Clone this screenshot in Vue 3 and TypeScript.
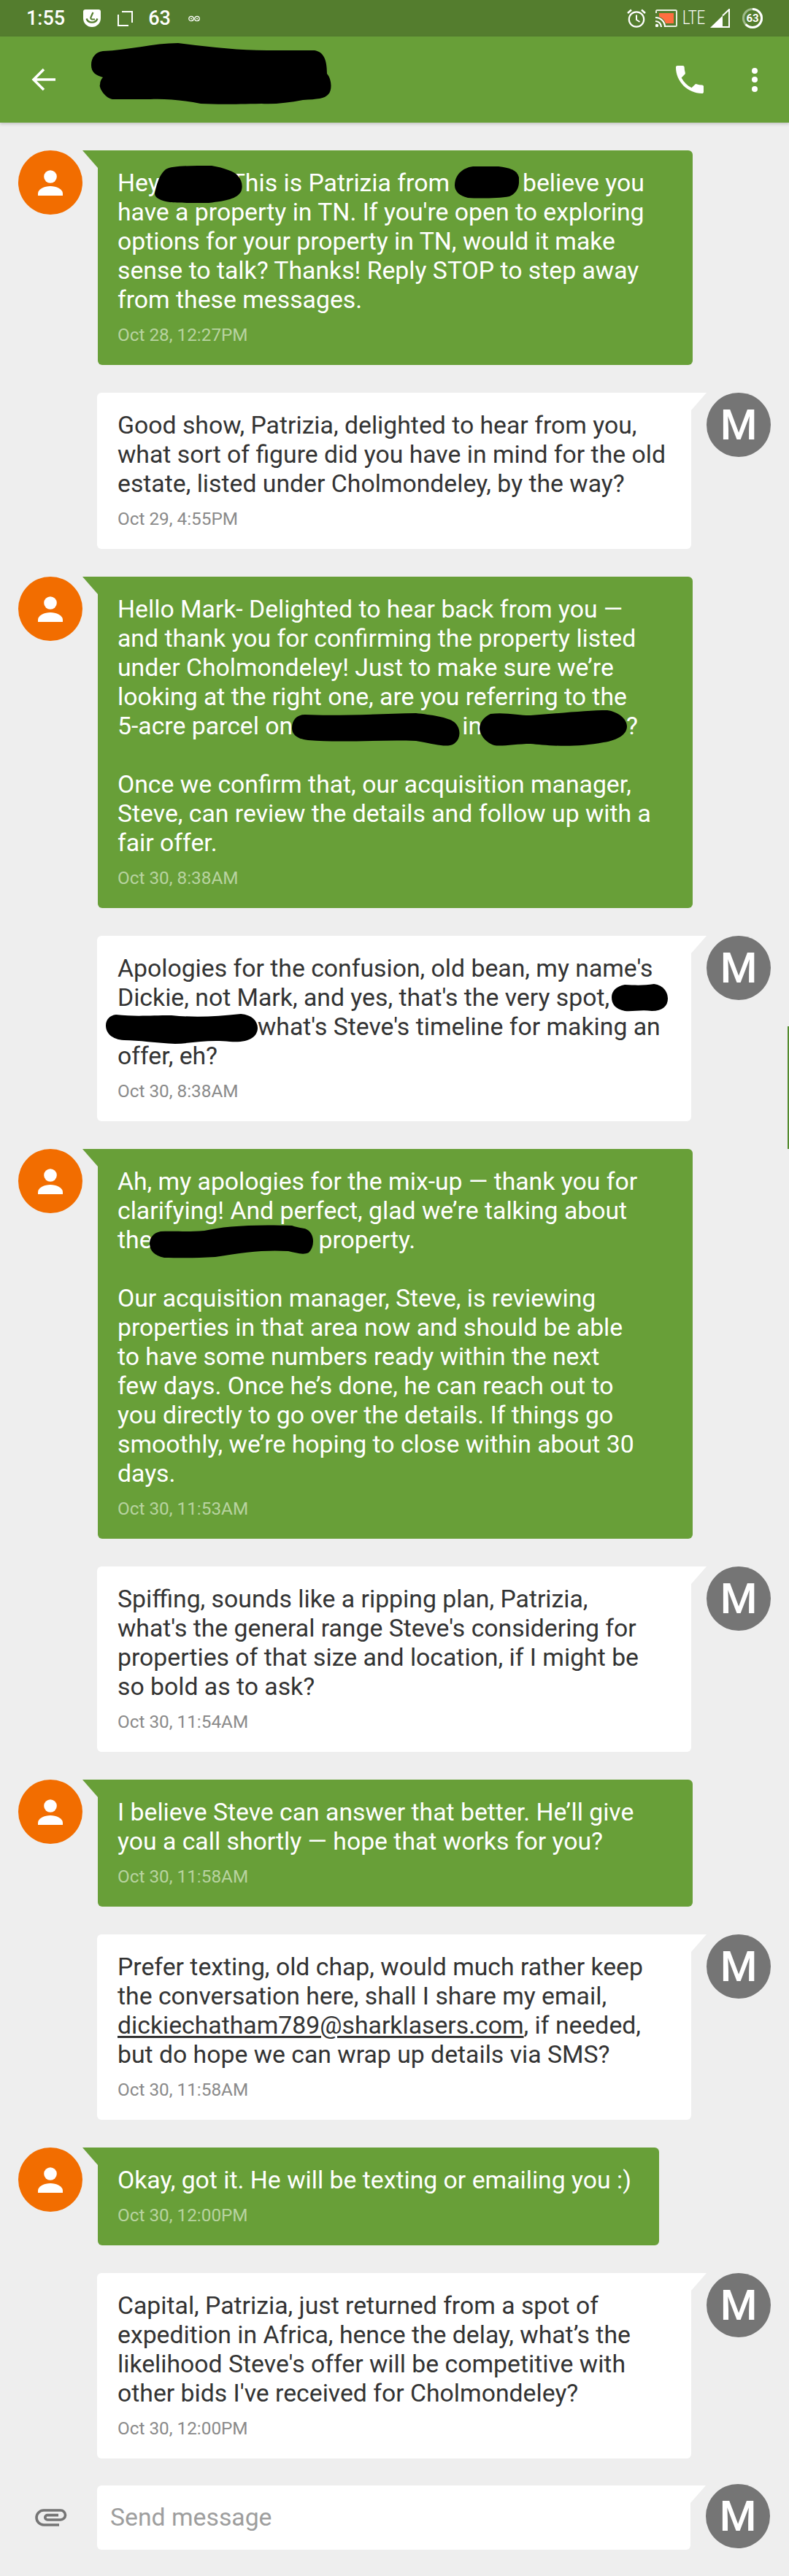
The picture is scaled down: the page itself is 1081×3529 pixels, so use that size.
<script setup lang="ts">
interface Seg { t?: string; gap?: number; u?: boolean }
interface Blob { x: number; y: number; w: number; h: number; d: string }
interface Msg { who: 'them' | 'me'; lines: (string | Seg[])[]; time: string; blobs?: Blob[]; short?: boolean }

const messages: Msg[] = [
  {
    who: 'them',
    time: 'Oct 28, 12:27PM',
    lines: [
      [{ t: 'Hey' }, { gap: 97 }, { t: 'This is Patrizia from' }, { gap: 100 }, { t: 'believe you' }],
      "have a property in TN. If you're open to exploring",
      'options for your property in TN, would it make',
      'sense to talk? Thanks! Reply STOP to step away',
      'from these messages.',
    ],
    blobs: [
      { x: 78, y: 21, w: 120, h: 51, d: 'M0 38C2 28 6 12 15 5C23 0 47 0 78 0C95 3 110 8 114 14C120 20 121 30 118 36C112 45 100 48 74 51C50 51 30 51 21 50C8 48 0 44 0 38Z' },
      { x: 489, y: 22, w: 88, h: 44, d: 'M0 26C0 12 10 2 25 0H60C75 2 85 4 88 15C89 27 86 36 75 41C60 44 30 44 18 43C6 40 0 34 0 26Z' },
    ],
  },
  {
    who: 'me',
    time: 'Oct 29, 4:55PM',
    lines: [
      'Good show, Patrizia, delighted to hear from you,',
      'what sort of figure did you have in mind for the old',
      'estate, listed under Cholmondeley, by the way?',
    ],
  },
  {
    who: 'them',
    time: 'Oct 30, 8:38AM',
    lines: [
      'Hello Mark- Delighted to hear back from you —',
      'and thank you for confirming the property listed',
      'under Cholmondeley! Just to make sure we’re',
      'looking at the right one, are you referring to the',
      [{ t: '5-acre parcel on' }, { gap: 232 }, { t: 'in' }, { gap: 198 }, { t: '?' }],
      '',
      'Once we confirm that, our acquisition manager,',
      'Steve, can review the details and follow up with a',
      'fair offer.',
    ],
    blobs: [
      { x: 266, y: 187, w: 230, h: 45, d: 'M18 2C60 4 120 1 170 0C190 2 215 6 222 12C232 20 232 35 222 42C212 48 195 42 170 38C120 36 70 41 22 37C5 35 0 28 0 20C0 10 6 2 18 2Z' },
      { x: 523, y: 183, w: 202, h: 49, d: 'M15 5C35 2 60 8 70 7C110 4 150 0 175 0C190 2 202 12 202 22C202 33 190 41 170 44C130 52 90 48 70 46C50 46 30 50 20 48C5 43 0 30 0 25C0 17 6 9 15 5Z' },
    ],
  },
  {
    who: 'me',
    time: 'Oct 30, 8:38AM',
    lines: [
      "Apologies for the confusion, old bean, my name's",
      "Dickie, not Mark, and yes, that's the very spot,",
      [{ gap: 192 }, { t: "what's Steve's timeline for making an" }],
      'offer, eh?',
    ],
    blobs: [
      { x: 705, y: 66, w: 77, h: 38, d: 'M18 1C35 2 45 2 58 0C72 2 77 12 77 20C77 30 70 37 55 37C40 35 30 38 18 37C5 34 0 28 0 18C0 10 6 3 18 1Z' },
      { x: 12, y: 107, w: 208, h: 41, d: 'M14 1C40 4 60 2 90 2C120 5 150 4 185 0C200 1 208 10 208 19C208 32 195 40 170 38C140 35 120 40 95 41C70 40 45 36 25 36C8 35 0 26 0 16C0 8 5 2 14 1Z' },
    ],
  },
  {
    who: 'them',
    time: 'Oct 30, 11:53AM',
    lines: [
      'Ah, my apologies for the mix-up — thank you for',
      'clarifying! And perfect, glad we’re talking about',
      [{ t: 'the' }, { gap: 228 }, { t: 'property.' }],
      '',
      'Our acquisition manager, Steve, is reviewing',
      'properties in that area now and should be able',
      'to have some numbers ready within the next',
      'few days. Once he’s done, he can reach out to',
      'you directly to go over the details. If things go',
      'smoothly, we’re hoping to close within about 30',
      'days.',
    ],
    blobs: [
      { x: 71, y: 104, w: 225, h: 46, d: 'M15 9C35 8 50 10 75 8C100 2 140 -1 195 1C205 5 212 3 218 8C226 15 226 30 218 38C210 42 200 38 190 36C160 34 130 37 90 44C60 46 35 45 20 45C6 42 0 35 0 25C0 18 5 11 15 9Z' },
    ],
  },
  {
    who: 'me',
    time: 'Oct 30, 11:54AM',
    lines: [
      'Spiffing, sounds like a ripping plan, Patrizia,',
      "what's the general range Steve's considering for",
      'properties of that size and location, if I might be',
      'so bold as to ask?',
    ],
  },
  {
    who: 'them',
    time: 'Oct 30, 11:58AM',
    lines: [
      'I believe Steve can answer that better. He’ll give',
      'you a call shortly — hope that works for you?',
    ],
  },
  {
    who: 'me',
    time: 'Oct 30, 11:58AM',
    lines: [
      'Prefer texting, old chap, would much rather keep',
      'the conversation here, shall I share my email,',
      [{ t: 'dickiechatham789@sharklasers.com', u: true }, { t: ', if needed,' }],
      'but do hope we can wrap up details via SMS?',
    ],
  },
  {
    who: 'them',
    time: 'Oct 30, 12:00PM',
    short: true,
    lines: ['Okay, got it. He will be texting or emailing you :)'],
  },
  {
    who: 'me',
    time: 'Oct 30, 12:00PM',
    lines: [
      'Capital, Patrizia, just returned from a spot of',
      'expedition in Africa, hence the delay, what’s the',
      "likelihood Steve's offer will be competitive with",
      "other bids I've received for Cholmondeley?",
    ],
  },
]

const segs = (l: string | Seg[]): Seg[] => (typeof l === 'string' ? [{ t: l }] : l)
</script>

<template>
  <div class="page">
    <header class="status">
      <div class="status-left">
        <span class="clock">1:55</span>
        <svg class="i-shield" viewBox="0 0 24 24" width="24" height="24">
          <path d="M3 0H21a3 3 0 0 1 3 3V12A12 12 0 0 1 0 12V3A3 3 0 0 1 3 0Z" fill="#fff" />
          <path d="M13.5 4L10.5 10.5Q9.8 13.5 12.5 13.5H16M4.5 12.5A8 8 0 0 0 19.5 12.5" fill="none" stroke="#547d2e" stroke-width="2.2" />
        </svg>
        <svg class="i-frame" viewBox="0 0 21 21" width="21" height="21">
          <path d="M6 1H20V16M15 20H1V5" fill="none" stroke="#fff" stroke-width="2" />
        </svg>
        <span class="num">63</span>
        <svg class="i-loop" viewBox="0 0 16 9" width="16" height="9">
          <circle cx="4" cy="4.5" r="3.2" fill="none" stroke="#fff" stroke-width="1.3" />
          <circle cx="12" cy="4.5" r="3.2" fill="none" stroke="#fff" stroke-width="1.3" />
          <circle cx="4" cy="4.5" r="1" fill="#fff" />
          <circle cx="12" cy="4.5" r="1" fill="#fff" />
        </svg>
      </div>
      <div class="status-right">
        <svg class="i-alarm" viewBox="0 0 26 26" width="26" height="26">
          <circle cx="13" cy="14.5" r="10.2" fill="none" stroke="#fff" stroke-width="2.2" />
          <path d="M13 8.5V15L17.5 18" fill="none" stroke="#fff" stroke-width="2" />
          <path d="M1 6L6 1.5M25 6L20 1.5" fill="none" stroke="#fff" stroke-width="2.4" />
        </svg>
        <svg class="i-cast" viewBox="0 0 30 24" width="30" height="24">
          <path d="M1 5V2.5A1.5 1.5 0 0 1 2.500 1H27.500A1.500 1.500 0 0 1 29 2.500V21.500A1.500 1.500 0 0 1 27.500 23H14" fill="none" stroke="#e8efe0" stroke-width="2" />
          <path d="M5 5H25V19H14A13 13 0 0 0 5 10Z" fill="#ff6e40" />
          <path d="M0 11A13 13 0 0 1 13 24M0 16A8 8 0 0 1 8 24" fill="none" stroke="#fff" stroke-width="2.200" />
          <circle cx="2" cy="22" r="2.200" fill="#fff" />
        </svg>
        <span class="lte">LTE</span>
        <svg class="i-signal" viewBox="0 0 27 26" width="27" height="26">
          <path d="M0 26L17 9.500V26Z" fill="#fff" />
          <path d="M17 9.500L26 1V25H17" fill="none" stroke="#fff" stroke-width="2" />
        </svg>
        <div class="battery">
          <svg viewBox="0 0 28 28" width="28" height="28">
            <circle cx="14" cy="14" r="12.500" fill="none" stroke="#9db98a" stroke-width="3" />
            <circle cx="14" cy="14" r="12.500" fill="none" stroke="#fff" stroke-width="3" stroke-dasharray="49.500 78.500" transform="rotate(-90 14 14)" />
          </svg>
          <span>63</span>
        </div>
      </div>
    </header>

    <div class="appbar">
      <svg class="back" viewBox="0 0 33 32" width="33" height="32">
        <path d="M33 16H3M17 2L3 16L17 30" fill="none" stroke="#fff" stroke-width="3.500" />
      </svg>
      <svg class="title-blob" viewBox="0 0 331 84" width="331" height="84">
        <path d="M0 30C0 20 6 12 16 11C50 10 85 0 119 0C160 5 200 10 241 10H306C318 12 323 22 323 42C330 50 330 65 325 70C320 76 310 77 290 78C270 82 250 84 233 83C190 84 170 84 150 83C125 78 100 76 81 77H29C18 75 10 60 12 57C12 52 14 49 16 47C6 44 0 40 0 30Z" fill="#000" />
      </svg>
      <svg class="phone" viewBox="3 3 18 18" width="38" height="38">
        <path d="M6.620 10.790c1.440 2.830 3.760 5.140 6.590 6.590l2.200-2.200c.27-.27.67-.36 1.020-.24 1.120.37 2.330.57 3.570.57.55 0 1 .45 1 1V20c0 .55-.45 1-1 1-9.390 0-17-7.610-17-17 0-.55.45-1 1-1h3.500c.55 0 1 .45 1 1 0 1.250.2 2.450.57 3.570.11.35.03.74-.25 1.020l-2.200 2.200z" fill="#fff" />
      </svg>
      <div class="dots"><i></i><i></i><i></i></div>
    </div>

    <main class="list">
      <div v-for="(m, i) in messages" :key="i" class="row" :class="m.who">
        <div v-if="m.who === 'them'" class="avatar orange">
          <svg viewBox="0 0 34 35" width="34" height="35">
            <circle cx="17" cy="9" r="8.800" fill="#fff" />
            <path d="M0 35V32C0 26 9 22 17 22S34 26 34 32V35Z" fill="#fff" />
          </svg>
        </div>
        <div class="bubble" :class="{ short: m.short }">
          <div v-for="(l, j) in m.lines" :key="j" class="line">
            <template v-for="(s, k) in segs(l)" :key="k">
              <span v-if="s.gap" class="gap" :style="{ width: s.gap + 'px' }"></span>
              <span v-else :class="{ link: s.u }">{{ s.t }}</span>
            </template>
          </div>
          <div class="time">{{ m.time }}</div>
          <svg
            v-for="(b, n) in m.blobs"
            :key="'b' + n"
            class="blob"
            :style="{ left: b.x + 'px', top: b.y + 'px' }"
            :width="b.w"
            :height="b.h"
            :viewBox="`0 0 ${b.w} ${b.h}`"
          >
            <path :d="b.d" fill="#000" />
          </svg>
        </div>
        <div v-if="m.who === 'me'" class="avatar grey">M</div>
      </div>
    </main>

    <footer class="composer">
      <svg class="clip" viewBox="0 0 44 24" width="44" height="24">
        <path d="M33 22H12A10 10 0 0 1 12 2H35A6.500 6.500 0 0 1 35 15H17A3.200 3.200 0 0 1 17 8.600H32" fill="none" stroke="#757575" stroke-width="3.600" />
      </svg>
      <div class="input">Send message</div>
      <div class="avatar grey">M</div>
    </footer>

    <div class="scrollbar"></div>
  </div>
</template>

<style scoped>
.page {
  position: relative;
  width: 1081px;
  height: 3529px;
  overflow: hidden;
  background: #eeeeee;
  font-family: Roboto, "Liberation Sans", sans-serif;
}
.status {
  height: 50px;
  background: #547d2e;
  color: #fff;
  display: flex;
  justify-content: space-between;
  align-items: center;
}
.status-left {
  display: flex;
  align-items: center;
  padding-left: 36px;
}
.clock,
.num {
  font-size: 27px;
  font-weight: 500;
  line-height: 50px;
}
.i-shield { margin-left: 25px; }
.i-frame { margin-left: 23px; }
.num { margin-left: 21px; }
.i-loop { margin-left: 24px; }
.status-right {
  display: flex;
  align-items: center;
  padding-right: 36px;
}
.i-cast { margin-left: 13px; }
.lte {
  width: 34px;
  margin-left: 7px;
  font-size: 25px;
  font-weight: 300;
  line-height: 50px;
  white-space: nowrap;
  transform: scaleX(0.8);
  transform-origin: left center;
}
.i-signal { margin-left: 4px; }
.battery {
  position: relative;
  width: 28px;
  height: 28px;
  margin-left: 17px;
}
.battery svg { display: block; }
.battery span {
  position: absolute;
  inset: 0;
  text-align: center;
  font-size: 15px;
  font-weight: 700;
  line-height: 28px;
}
.appbar {
  position: relative;
  z-index: 1;
  height: 118px;
  background: #689f38;
  box-shadow: 0 2px 4px rgba(0, 0, 0, 0.18);
  display: flex;
  align-items: center;
}
.back { margin-left: 43px; }
.title-blob { margin-left: 49px; margin-top: -16px; }
.phone { margin-left: 470px; }
.dots {
  display: flex;
  flex-direction: column;
  gap: 4.500px;
  margin-left: 66px;
}
.dots i {
  display: block;
  width: 8px;
  height: 8px;
  border-radius: 50%;
  background: #fff;
}
.list {
  display: flex;
  flex-direction: column;
  gap: 38px;
  padding-top: 38px;
}
.row {
  display: flex;
  align-items: flex-start;
}
.row.them { padding-left: 25px; }
.row.me { padding-left: 133px; }
.avatar {
  flex: none;
  width: 88px;
  height: 88px;
  border-radius: 50%;
  display: flex;
  align-items: center;
  justify-content: center;
  color: #fff;
  font-size: 58px;
  font-weight: 500;
}
.orange { background: #f26d00; }
.grey { background: #757575; }
.bubble {
  position: relative;
  box-sizing: border-box;
  width: 814px;
  padding: 25px 24px 25px 28px;
  font-size: 33.75px;
  line-height: 40px;
}
.bubble::before {
  content: "";
  position: absolute;
  top: 0;
  width: 21px;
  height: 24px;
}
.them .bubble {
  margin-left: 21px;
  width: 815px;
  padding-left: 27px;
  background: #689f38;
  color: #fff;
  border-radius: 0 6px 6px 6px;
}
.them .bubble.short { width: 769px; }
.them .bubble::before {
  left: -21px;
  background: #689f38;
  clip-path: polygon(0 0, 100% 0, 100% 100%);
}
.me .bubble {
  margin-right: 21px;
  background: #fff;
  color: #333333;
  border-radius: 6px 0 6px 6px;
}
.me .bubble::before {
  right: -21px;
  background: #fff;
  clip-path: polygon(0 0, 100% 0, 0 100%);
}
.line {
  height: 40px;
  white-space: pre;
}
.gap { display: inline-block; }
.link { text-decoration: underline; text-underline-offset: 3px; }
.time {
  margin-top: 12px;
  font-size: 24.3px;
  line-height: 32px;
}
.them .time { color: #b8d3a0; }
.me .time { color: #8a8a8a; }
.blob {
  position: absolute;
  display: block;
}
.composer {
  display: flex;
  align-items: flex-start;
  padding: 35px 0 0 48px;
}
.clip { margin-top: 34px; }
.input {
  box-sizing: border-box;
  width: 813px;
  height: 88px;
  margin: 2px 21px 0 41px;
  padding-left: 18px;
  background: #fff;
  border-radius: 6px 0 6px 6px;
  color: #9e9e9e;
  font-size: 33.75px;
  line-height: 88px;
  position: relative;
}
.input::before {
  content: "";
  position: absolute;
  top: 0;
  right: -21px;
  width: 21px;
  height: 24px;
  background: #fff;
  clip-path: polygon(0 0, 100% 0, 0 100%);
}
.scrollbar {
  position: absolute;
  top: 1406px;
  right: 0;
  width: 2px;
  height: 168px;
  background: #558b2f;
}
</style>
